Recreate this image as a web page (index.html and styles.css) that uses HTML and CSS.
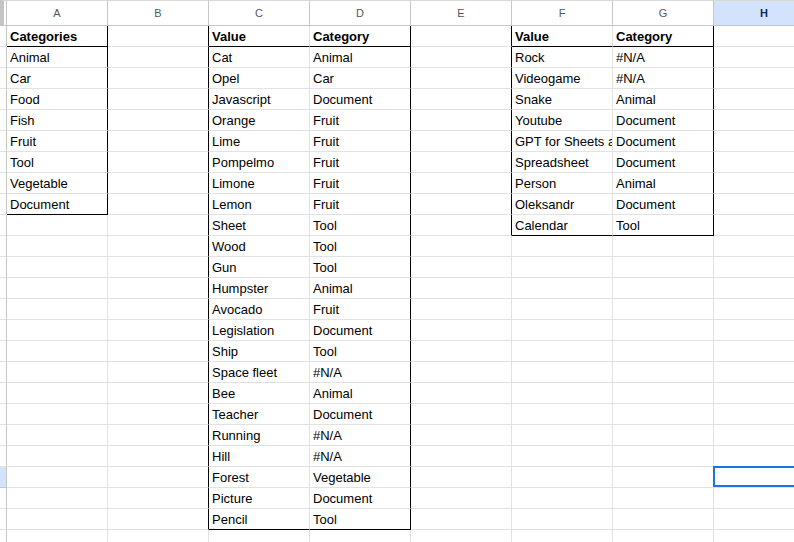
FILE: index.html
```html
<!DOCTYPE html>
<html>
<head>
<meta charset="utf-8">
<link rel="stylesheet" href="styles.css">
</head>
<body>
<div class="sheet">
  <div class="row head">
    <div class="corner"></div>
    <div class="ch">A</div><div class="ch">B</div><div class="ch">C</div><div class="ch">D</div><div class="ch">E</div><div class="ch">F</div><div class="ch">G</div><div class="ch active">H</div>
  </div>
  <div class="row"><div class="rh"></div><div class="cell b kr kb">Categories</div><div class="cell kr"></div><div class="cell b kb">Value</div><div class="cell b kr kb">Category</div><div class="cell kr"></div><div class="cell b kb">Value</div><div class="cell b kr kb">Category</div><div class="cell"></div></div>
  <div class="row"><div class="rh"></div><div class="cell kr">Animal</div><div class="cell kr"></div><div class="cell">Cat</div><div class="cell kr">Animal</div><div class="cell kr"></div><div class="cell">Rock</div><div class="cell kr">#N/A</div><div class="cell"></div></div>
  <div class="row"><div class="rh"></div><div class="cell kr">Car</div><div class="cell kr"></div><div class="cell">Opel</div><div class="cell kr">Car</div><div class="cell kr"></div><div class="cell">Videogame</div><div class="cell kr">#N/A</div><div class="cell"></div></div>
  <div class="row"><div class="rh"></div><div class="cell kr">Food</div><div class="cell kr"></div><div class="cell">Javascript</div><div class="cell kr">Document</div><div class="cell kr"></div><div class="cell">Snake</div><div class="cell kr">Animal</div><div class="cell"></div></div>
  <div class="row"><div class="rh"></div><div class="cell kr">Fish</div><div class="cell kr"></div><div class="cell">Orange</div><div class="cell kr">Fruit</div><div class="cell kr"></div><div class="cell">Youtube</div><div class="cell kr">Document</div><div class="cell"></div></div>
  <div class="row"><div class="rh"></div><div class="cell kr">Fruit</div><div class="cell kr"></div><div class="cell">Lime</div><div class="cell kr">Fruit</div><div class="cell kr"></div><div class="cell">GPT for Sheets and Docs</div><div class="cell kr">Document</div><div class="cell"></div></div>
  <div class="row"><div class="rh"></div><div class="cell kr">Tool</div><div class="cell kr"></div><div class="cell">Pompelmo</div><div class="cell kr">Fruit</div><div class="cell kr"></div><div class="cell">Spreadsheet</div><div class="cell kr">Document</div><div class="cell"></div></div>
  <div class="row"><div class="rh"></div><div class="cell kr">Vegetable</div><div class="cell kr"></div><div class="cell">Limone</div><div class="cell kr">Fruit</div><div class="cell kr"></div><div class="cell">Person</div><div class="cell kr">Animal</div><div class="cell"></div></div>
  <div class="row"><div class="rh"></div><div class="cell kr kb">Document</div><div class="cell kr"></div><div class="cell">Lemon</div><div class="cell kr">Fruit</div><div class="cell kr"></div><div class="cell">Oleksandr</div><div class="cell kr">Document</div><div class="cell"></div></div>
  <div class="row"><div class="rh"></div><div class="cell"></div><div class="cell kr"></div><div class="cell">Sheet</div><div class="cell kr">Tool</div><div class="cell kr"></div><div class="cell kb">Calendar</div><div class="cell kr kb">Tool</div><div class="cell"></div></div>
  <div class="row"><div class="rh"></div><div class="cell"></div><div class="cell kr"></div><div class="cell">Wood</div><div class="cell kr">Tool</div><div class="cell"></div><div class="cell"></div><div class="cell"></div><div class="cell"></div></div>
  <div class="row"><div class="rh"></div><div class="cell"></div><div class="cell kr"></div><div class="cell">Gun</div><div class="cell kr">Tool</div><div class="cell"></div><div class="cell"></div><div class="cell"></div><div class="cell"></div></div>
  <div class="row"><div class="rh"></div><div class="cell"></div><div class="cell kr"></div><div class="cell">Humpster</div><div class="cell kr">Animal</div><div class="cell"></div><div class="cell"></div><div class="cell"></div><div class="cell"></div></div>
  <div class="row"><div class="rh"></div><div class="cell"></div><div class="cell kr"></div><div class="cell">Avocado</div><div class="cell kr">Fruit</div><div class="cell"></div><div class="cell"></div><div class="cell"></div><div class="cell"></div></div>
  <div class="row"><div class="rh"></div><div class="cell"></div><div class="cell kr"></div><div class="cell">Legislation</div><div class="cell kr">Document</div><div class="cell"></div><div class="cell"></div><div class="cell"></div><div class="cell"></div></div>
  <div class="row"><div class="rh"></div><div class="cell"></div><div class="cell kr"></div><div class="cell">Ship</div><div class="cell kr">Tool</div><div class="cell"></div><div class="cell"></div><div class="cell"></div><div class="cell"></div></div>
  <div class="row"><div class="rh"></div><div class="cell"></div><div class="cell kr"></div><div class="cell">Space fleet</div><div class="cell kr">#N/A</div><div class="cell"></div><div class="cell"></div><div class="cell"></div><div class="cell"></div></div>
  <div class="row"><div class="rh"></div><div class="cell"></div><div class="cell kr"></div><div class="cell">Bee</div><div class="cell kr">Animal</div><div class="cell"></div><div class="cell"></div><div class="cell"></div><div class="cell"></div></div>
  <div class="row"><div class="rh"></div><div class="cell"></div><div class="cell kr"></div><div class="cell">Teacher</div><div class="cell kr">Document</div><div class="cell"></div><div class="cell"></div><div class="cell"></div><div class="cell"></div></div>
  <div class="row"><div class="rh"></div><div class="cell"></div><div class="cell kr"></div><div class="cell">Running</div><div class="cell kr">#N/A</div><div class="cell"></div><div class="cell"></div><div class="cell"></div><div class="cell"></div></div>
  <div class="row"><div class="rh"></div><div class="cell"></div><div class="cell kr"></div><div class="cell">Hill</div><div class="cell kr">#N/A</div><div class="cell"></div><div class="cell"></div><div class="cell"></div><div class="cell"></div></div>
  <div class="row"><div class="rh sel"></div><div class="cell"></div><div class="cell kr"></div><div class="cell">Forest</div><div class="cell kr">Vegetable</div><div class="cell"></div><div class="cell"></div><div class="cell"></div><div class="cell current"></div></div>
  <div class="row"><div class="rh"></div><div class="cell"></div><div class="cell kr"></div><div class="cell">Picture</div><div class="cell kr">Document</div><div class="cell"></div><div class="cell"></div><div class="cell"></div><div class="cell"></div></div>
  <div class="row"><div class="rh"></div><div class="cell"></div><div class="cell kr"></div><div class="cell kb">Pencil</div><div class="cell kr kb">Tool</div><div class="cell"></div><div class="cell"></div><div class="cell"></div><div class="cell"></div></div>
  <div class="row"><div class="rh"></div><div class="cell"></div><div class="cell"></div><div class="cell"></div><div class="cell"></div><div class="cell"></div><div class="cell"></div><div class="cell"></div><div class="cell"></div></div>
</div>
</body>
</html>
```
FILE: styles.css
```css
html, body {
  margin: 0;
  padding: 0;
  background: #fff;
  overflow: hidden;
}
.sheet {
  width: 794px;
  height: 542px;
  overflow: hidden;
  font-family: "Liberation Sans", Arial, sans-serif;
  font-size: 13px;
  color: #000;
}
.row {
  display: grid;
  grid-template-columns: 7px repeat(8, 101px);
  height: 21px;
}
.row.head {
  height: 26px;
}
.row > div {
  box-sizing: border-box;
}
.corner {
  border-top: 1px solid #d9d9d9;
  border-left: 4px solid #c4c4c4;
  border-right: 1px solid #c4c7c5;
  border-bottom: 1px solid #c4c7c5;
}
.ch {
  border-top: 1px solid #d9d9d9;
  border-right: 1px solid #c4c7c5;
  border-bottom: 1px solid #c4c7c5;
  text-align: center;
  font-size: 11px;
  color: #575757;
  padding-top: 1px;
  line-height: 23px;
}
.ch.active {
  background: #d3e3fd;
  color: #0b2a66;
  font-weight: bold;
}
.rh {
  border-right: 1px solid #c4c7c5;
  border-bottom: 1px solid #e2e2e2;
}
.rh.sel {
  background: #d3e3fd;
  border-bottom-color: #c4c7c5;
}
.cell {
  border-right: 1px solid #e2e2e2;
  border-bottom: 1px solid #e2e2e2;
  padding: 2px 3px 0 3px;
  line-height: 18px;
  white-space: nowrap;
  overflow: hidden;
}
.cell.b {
  font-weight: bold;
}
.cell.kr {
  border-right-color: #000;
}
.cell.kb {
  border-bottom-color: #000;
}
.cell.current {
  position: relative;
  overflow: visible;
}
.cell.current::after {
  content: "";
  position: absolute;
  top: -1px;
  left: -1px;
  right: -1px;
  bottom: 0;
  border: 2px solid #1a73e8;
}
```
